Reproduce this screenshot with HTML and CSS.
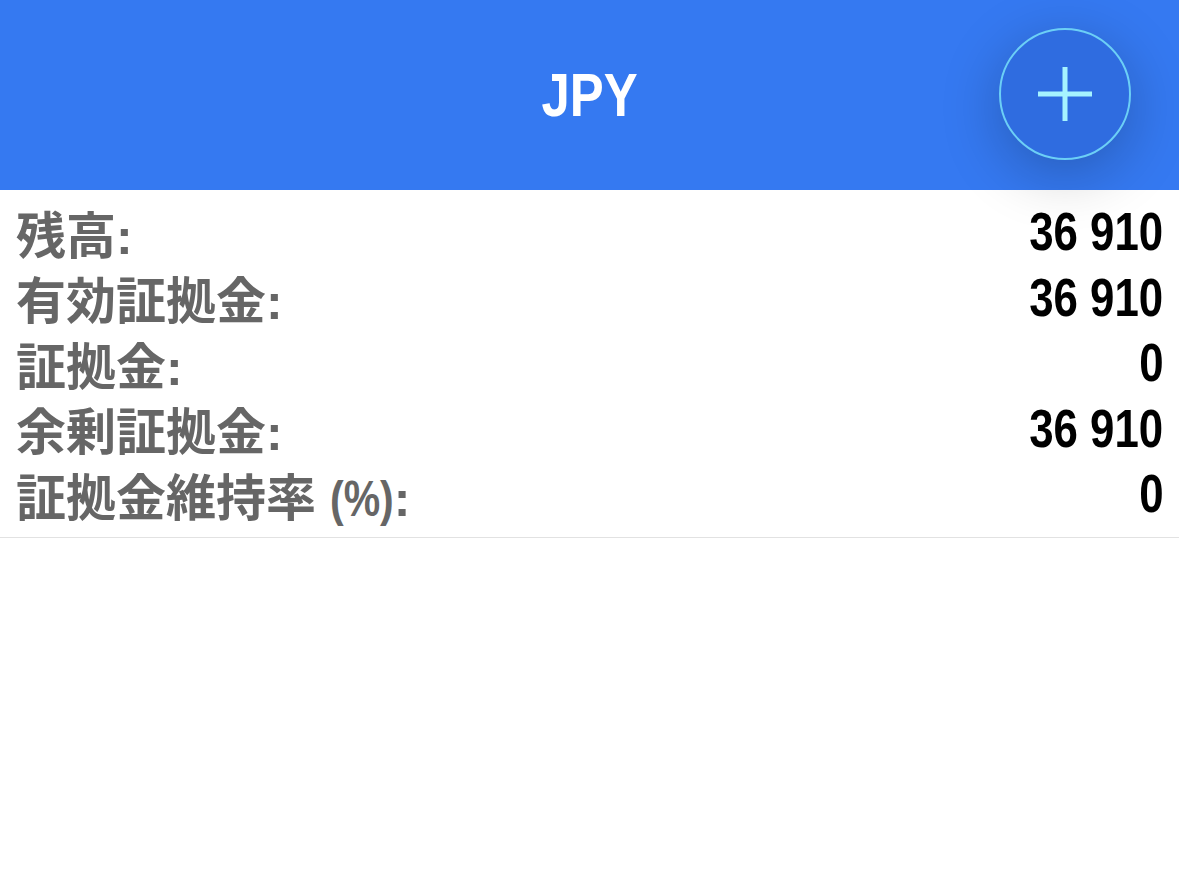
FILE: index.html
```html
<!DOCTYPE html>
<html lang="ja">
<head>
    <meta charset="UTF-8">
    <meta name="viewport" content="width=device-width, initial-scale=1.0">
    <title>JPY</title>
    <link rel="stylesheet" href="styles.css">
</head>
<body>
    <header class="topbar">
        <h1 class="title">JPY</h1>
        <button class="fab" type="button" aria-label="追加">
            <svg width="56" height="56" viewBox="0 0 56 56">
                <path d="M28 1 V55 M1 28 H55" stroke="#a6f3ff" stroke-width="5" fill="none"/>
            </svg>
        </button>
    </header>
    <section class="account">
        <div class="row"><span class="label">残高:</span><span class="value">36 910</span></div>
        <div class="row"><span class="label">有効証拠金:</span><span class="value">36 910</span></div>
        <div class="row"><span class="label">証拠金:</span><span class="value">0</span></div>
        <div class="row"><span class="label">余剰証拠金:</span><span class="value">36 910</span></div>
        <div class="row"><span class="label">証拠金維持率 <span class="narrow">(%)</span>:</span><span class="value">0</span></div>
    </section>
</body>
</html>
```

FILE: styles.css
```css
body {
    margin: 0;
    font-family: "Liberation Sans", "Noto Sans CJK JP", sans-serif;
    background-color: #ffffff;
}

.topbar {
    position: relative;
    height: 190px;
    background-color: #3579f1;
    display: flex;
    align-items: center;
    justify-content: center;
}

/* no condensed face installed, so squeeze the regular bold */
.title {
    margin: 0;
    padding-bottom: 2px;
    font-size: 62px;
    font-weight: bold;
    color: #ffffff;
    transform: scaleX(0.82);
}

.fab {
    position: absolute;
    left: 999px;
    top: 28px;
    width: 132px;
    height: 132px;
    padding: 0;
    border-radius: 50%;
    border: 2px solid #6ccff6;
    background-color: #2f6ce0;
    box-shadow: 0 14px 60px rgba(0, 0, 0, 0.24);
    display: flex;
    align-items: center;
    justify-content: center;
    z-index: 2;
}

.account {
    padding: 9px 16px 10px;
    border-bottom: 1px solid #e2e2e2;
}

.row {
    display: flex;
    justify-content: space-between;
    align-items: center;
    height: 65.5px;
}

.label {
    font-size: 50px;
    font-weight: bold;
    color: #666666;
}

.narrow {
    display: inline-block;
    margin-right: -14px;
    transform: scaleX(0.82);
    transform-origin: left center;
}

.value {
    display: inline-block;
    font-size: 53px;
    font-weight: bold;
    color: #000000;
    transform: scaleX(0.826);
    transform-origin: right center;
}
```
